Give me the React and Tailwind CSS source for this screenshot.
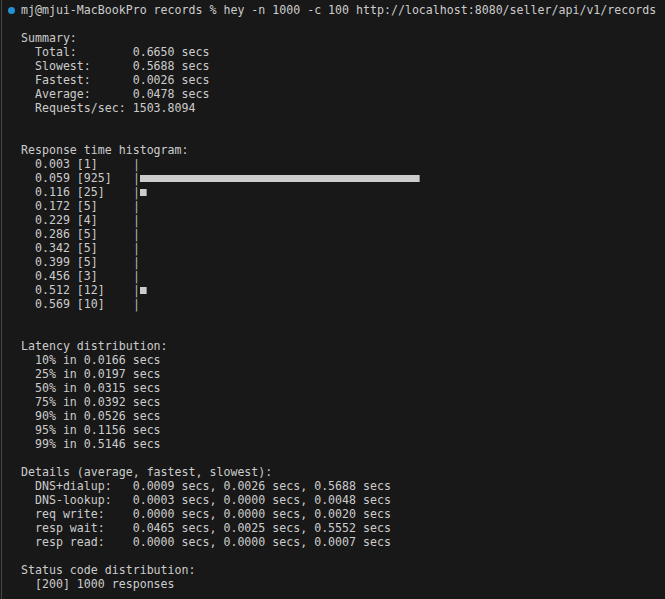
const mono = { fontFamily: '"DejaVu Sans Mono", "Liberation Mono", monospace' };

const summary = [
  '',
  'Summary:',
  '  Total:        0.6650 secs',
  '  Slowest:      0.5688 secs',
  '  Fastest:      0.0026 secs',
  '  Average:      0.0478 secs',
  '  Requests/sec: 1503.8094',
  '',
  '',
  'Response time histogram:',
];

// label, bar width in px (one block = 7px)
const histogram = [
  ['0.003 [1]', 0],
  ['0.059 [925]', 280],
  ['0.116 [25]', 7],
  ['0.172 [5]', 0],
  ['0.229 [4]', 0],
  ['0.286 [5]', 0],
  ['0.342 [5]', 0],
  ['0.399 [5]', 0],
  ['0.456 [3]', 0],
  ['0.512 [12]', 7],
  ['0.569 [10]', 0],
];

const rest = [
  '',
  '',
  'Latency distribution:',
  '  10% in 0.0166 secs',
  '  25% in 0.0197 secs',
  '  50% in 0.0315 secs',
  '  75% in 0.0392 secs',
  '  90% in 0.0526 secs',
  '  95% in 0.1156 secs',
  '  99% in 0.5146 secs',
  '',
  'Details (average, fastest, slowest):',
  '  DNS+dialup:   0.0009 secs, 0.0026 secs, 0.5688 secs',
  '  DNS-lookup:   0.0003 secs, 0.0000 secs, 0.0048 secs',
  '  req write:    0.0000 secs, 0.0000 secs, 0.0020 secs',
  '  resp wait:    0.0465 secs, 0.0025 secs, 0.5552 secs',
  '  resp read:    0.0000 secs, 0.0000 secs, 0.0007 secs',
  '',
  'Status code distribution:',
  '  [200] 1000 responses',
];

function Line({ children }) {
  return <div className="h-[14px] whitespace-pre">{children || ' '}</div>;
}

export default function App() {
  return (
    <div className="min-h-screen bg-[#181818] text-[#cccccc]" style={mono}>
      <div className="ml-[1px] min-h-screen border-l border-[#464646] flex pt-[3px]">
        {/* gutter with command decoration */}
        <div className="w-[19px] shrink-0">
          <div className="ml-[6px] mt-[4px] h-[7px] w-[7px] rounded-full bg-[#2391d3]" />
        </div>

        <div className="flex-1 text-[11.6px] leading-[14px]">
          <Line>mj@mjui-MacBookPro records % hey -n 1000 -c 100 http://localhost:8080/seller/api/v1/records</Line>
          {summary.map((s, i) => (
            <Line key={`s${i}`}>{s}</Line>
          ))}
          {histogram.map(([label, w]) => (
            <div key={label} className="h-[14px] flex items-start whitespace-pre">
              <span className="w-[112px] shrink-0">{`  ${label}`}</span>
              <span className="w-[7px] shrink-0 text-center text-[#b8b8b8]">|</span>
              {w > 0 && (
                <span
                  className="mt-[4px] h-[7px] bg-[#cccccc] border-r border-[#8a8a8a]"
                  style={{ width: w }}
                />
              )}
            </div>
          ))}
          {rest.map((s, i) => (
            <Line key={`r${i}`}>{s}</Line>
          ))}
        </div>
      </div>
    </div>
  );
}
